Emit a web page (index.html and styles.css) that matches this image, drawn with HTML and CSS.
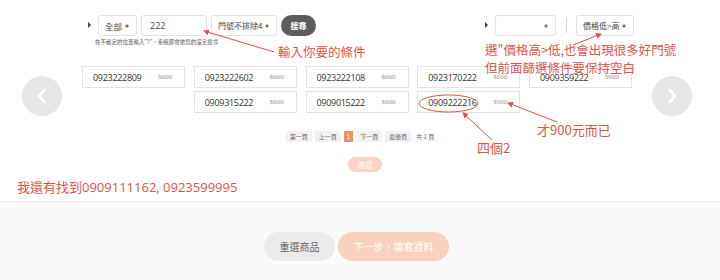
FILE: index.html
```
<!DOCTYPE html>
<html lang="zh-Hant">
<head>
<meta charset="utf-8">
<link rel="stylesheet" href="styles.css">
</head>
<body>
<div class="page">
  <div class="filters">
    <div class="group left">
      <span class="caret"></span>
      <div class="sel w39">全部<span class="updown"></span></div>
      <div class="inp">222</div>
      <div class="sel w66">門號不排除4<span class="updown"></span></div>
      <button class="search">搜尋</button>
      <div class="hint">在不確定的位置輸入"?"，系統即會依您的設定搜尋</div>
    </div>
    <div class="group right">
      <span class="caret"></span>
      <div class="sel w61"><span class="updown"></span></div>
      <span class="divider"></span>
      <div class="sel w58">價格低&gt;高<span class="updown"></span></div>
    </div>
  </div>

  <div class="results">
    <div class="circle"><svg width="14" height="20" viewBox="0 0 14 20"><path d="M10 3 L4 10 L10 17" fill="none" stroke="#fff" stroke-width="2.4"/></svg></div>
    <div class="grid">
      <div class="card"><span class="num">0923222809</span><span class="price">$600</span></div>
      <div class="card"><span class="num">0923222602</span><span class="price">$600</span></div>
      <div class="card"><span class="num">0923222108</span><span class="price">$600</span></div>
      <div class="card"><span class="num">0923170222</span><span class="price">$600</span></div>
      <div class="card"><span class="num">0909359222</span><span class="price">$600</span></div>
      <div class="card c2"><span class="num">0909315222</span><span class="price">$600</span></div>
      <div class="card"><span class="num">0909015222</span><span class="price">$600</span></div>
      <div class="card"><span class="num">0909222216</span><span class="price">$900</span></div>
    </div>
    <div class="circle"><svg width="14" height="20" viewBox="0 0 14 20"><path d="M4 3 L10 10 L4 17" fill="none" stroke="#fff" stroke-width="2.4"/></svg></div>
  </div>

  <div class="pager">
    <span class="pg">第一頁</span>
    <span class="pg">上一頁</span>
    <span class="pg cur">1</span>
    <span class="pg">下一頁</span>
    <span class="pg">最後頁</span>
    <span class="total">共 1 頁</span>
  </div>

  <div class="confirm-row"><button class="confirm">確認</button></div>

  <div class="note">我還有找到0909111162, 0923599995</div>

  <div class="bottom">
    <button class="btn gray">重選商品</button>
    <button class="btn peach">下一步，填寫資料</button>
  </div>

  <div class="ann a1">輸入你要的條件</div>
  <div class="ann a2">選"價格高&gt;低,也會出現很多好門號<br>但前面篩選條件要保持空白</div>
  <div class="ann a3">四個2</div>
  <div class="ann a4">才900元而已</div>
  <svg class="overlay" width="720" height="280" viewBox="0 0 720 280">
    <defs>
      <marker id="ah" markerWidth="6" markerHeight="6" refX="5" refY="3" orient="auto">
        <path d="M0 0 L6 3 L0 6 Z" fill="#d9534a"/>
      </marker>
    </defs>
    <line x1="274" y1="52" x2="204" y2="31" stroke="#d9534a" stroke-width="1" marker-end="url(#ah)"/>
    <line x1="573" y1="45" x2="601" y2="34" stroke="#d9534a" stroke-width="1" marker-end="url(#ah)"/>
    <ellipse cx="448.5" cy="103.5" rx="29.5" ry="8.5" fill="none" stroke="#d9534a" stroke-width="1"/>
    <line x1="492" y1="140" x2="463" y2="113" stroke="#d9534a" stroke-width="1" marker-end="url(#ah)"/>
    <line x1="557" y1="122" x2="508" y2="103" stroke="#d9534a" stroke-width="1" marker-end="url(#ah)"/>
  </svg>
</div>
</body>
</html>
```
FILE: styles.css
```
* { box-sizing: border-box; }
body {
  margin: 0;
  background: #fff;
  font-family: "Open Sans", "Noto Sans CJK TC", sans-serif;
  color: #333;
}
.page {
  position: relative;
  width: 720px;
  height: 280px;
  overflow: hidden;
}
.filters {
  display: flex;
  justify-content: space-between;
  padding: 15px 86px 0 88px;
  height: 66px;
}
.group {
  position: relative;
  display: flex;
  align-items: flex-start;
  gap: 4px;
  height: 20px;
}
.caret {
  width: 0;
  height: 0;
  border-top: 3px solid transparent;
  border-bottom: 3px solid transparent;
  border-left: 3px solid #444;
  margin: 7px 3px 0 0;
}
.sel, .inp {
  height: 21px;
  border: 1px solid #e2e2e2;
  border-radius: 3px;
  font-size: 8px;
  color: #444;
  display: flex;
  align-items: center;
  padding-left: 6px;
  position: relative;
  background: #fff;
  font-family: "Noto Sans CJK TC", sans-serif;
}
.inp { width: 66px; font-size: 9px; font-family: "Open Sans", sans-serif; padding-left: 8px; }
.w39 { width: 39px; font-size: 8.5px; }
.w66 { width: 66px; }
.w61 { width: 61px; }
.w58 { width: 58px; }
.updown {
  position: absolute;
  right: 7px;
  top: 7.5px;
  width: 4px;
  height: 5px;
}
.updown::before, .updown::after {
  content: "";
  position: absolute;
  left: 0;
  border-left: 2px solid transparent;
  border-right: 2px solid transparent;
}
.updown::before { top: 0; border-bottom: 2.5px solid #777; }
.updown::after { top: 2.5px; border-top: 2.5px solid #777; }
.search {
  width: 35px;
  height: 21px;
  border: none;
  border-radius: 11px;
  background: #5d5d5d;
  color: #fff;
  font-size: 8px;
  font-weight: 700;
  font-family: "Noto Sans CJK TC", sans-serif;
  padding: 0;
}
.hint {
  position: absolute;
  left: 7px;
  top: 23px;
  font-size: 5.5px;
  color: #555;
  white-space: nowrap;
  font-family: "Noto Sans CJK TC", sans-serif;
}
.divider {
  width: 1px;
  height: 16px;
  background: #cfcfcf;
  margin: 2px 5px 0 6px;
}
.results {
  display: flex;
  align-items: flex-start;
  gap: 20px;
  padding-left: 22px;
  height: 64px;
}
.circle {
  width: 40px;
  height: 40px;
  border-radius: 50%;
  background: #e6e6e6;
  display: flex;
  align-items: center;
  justify-content: center;
  margin-top: 10px;
}
.grid {
  display: grid;
  grid-template-columns: repeat(5, 103px);
  column-gap: 8.75px;
  row-gap: 3px;
  width: 550px;
}
.card {
  height: 22px;
  border: 1px solid #e3e3e3;
  display: flex;
  align-items: center;
  padding-left: 10px;
}
.c2 { grid-column-start: 2; }
.num {
  font-size: 9px;
  letter-spacing: -0.3px;
  color: #333;
  width: 65px;
}
.price {
  font-size: 7px;
  color: #999;
  font-family: "Liberation Serif", serif;
}
.pager {
  display: flex;
  justify-content: center;
  align-items: center;
  gap: 3px;
  height: 12px;
  font-family: "Noto Sans CJK TC", sans-serif;
}
.pg {
  background: #f2f2f2;
  color: #666;
  font-size: 6px;
  padding: 0 4px;
  height: 11px;
  line-height: 11px;
}
.cur {
  background: #f0925f;
  color: #fff;
  padding: 0 3px;
}
.total {
  font-size: 6px;
  color: #666;
  margin-left: 2px;
}
.confirm-row {
  display: flex;
  justify-content: center;
  padding-left: 10px;
  margin-top: 15px;
  height: 14px;
}
.confirm {
  width: 34px;
  height: 15px;
  border: none;
  border-radius: 8px;
  background: #f9d3c5;
  color: #fff;
  font-size: 7.5px;
  padding: 0;
  font-family: "Noto Sans CJK TC", sans-serif;
}
.note {
  padding-left: 17px;
  font-size: 13px;
  color: #dd5548;
  height: 31px;
  line-height: 16px;
  padding-top: 8px;
  border-bottom: 1px solid #ececec;
}
.bottom {
  background: #fafafa;
  height: 79px;
  display: flex;
  justify-content: center;
  gap: 3px;
  padding: 30px 7px 0 0;
}
.btn {
  height: 29px;
  border: none;
  border-radius: 15px;
  font-size: 10px;
  font-family: "Noto Sans CJK TC", sans-serif;
  padding: 0;
}
.gray { width: 71px; background: #ebebeb; color: #666; }
.peach { width: 111px; background: #f9d1c1; color: #fff; }
.ann {
  position: absolute;
  color: #dd5548;
  white-space: nowrap;
  font-family: "Noto Sans CJK TC", sans-serif;
  font-size: 12.5px;
  line-height: 18px;
}
.a1 { left: 278px; top: 43px; }
.a2 { left: 485px; top: 41px; }
.a3 { left: 477px; top: 139px; font-size: 13px; }
.a4 { left: 537px; top: 121px; font-size: 13px; }
.overlay { position: absolute; left: 0; top: 0; pointer-events: none; }
```
